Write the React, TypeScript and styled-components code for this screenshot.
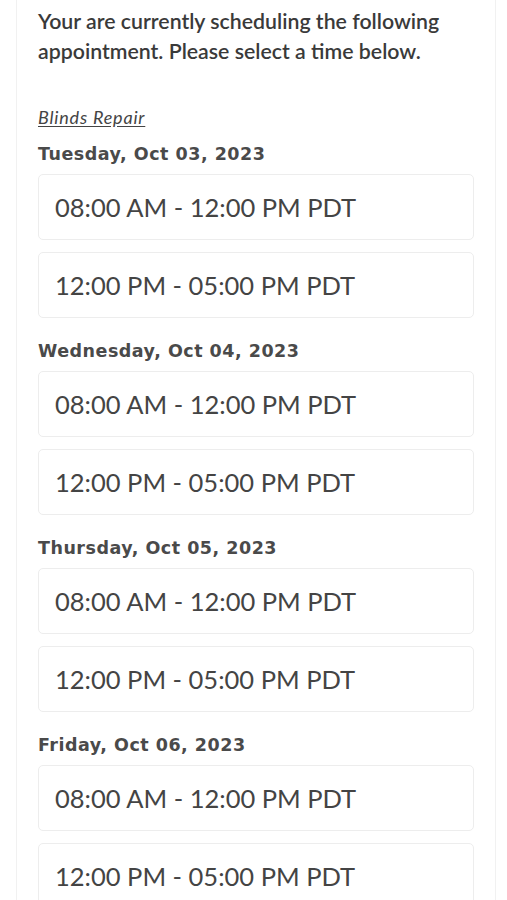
import styled, { createGlobalStyle } from 'styled-components'

const GlobalStyle = createGlobalStyle`
  html, body {
    margin: 0;
    padding: 0;
    background: #fff;
  }
  body {
    font-family: Lato, "Liberation Sans", sans-serif;
    color: #333;
  }
`

const Card = styled.div`
  margin: 0 11px 0 16px;
  border: 1px solid #f1f1f1;
  border-top: none;
  padding: 6px 21px 0 21px;
  min-height: 900px;
  box-sizing: border-box;
  overflow: hidden;
`

const Intro = styled.p`
  margin: 0;
  font-size: 21.3px;
  line-height: 30px;
  font-weight: 600;
  color: #3a3a3a;
`

const Service = styled.a`
  display: inline-block;
  margin-top: 40px;
  font-size: 18px;
  letter-spacing: 0.8px;
  font-style: italic;
  color: #444;
  text-decoration: underline;
  text-underline-offset: 2px;
`

const Day = styled.section`
  margin-top: 16px;

  & + & {
    margin-top: 23px;
  }
`

const DayTitle = styled.h3`
  margin: 0 0 10px;
  font-family: "DejaVu Sans", "Open Sans", sans-serif;
  font-size: 17.5px;
  line-height: 20px;
  letter-spacing: 0.5px;
  font-weight: 600;
  color: #4a4a4a;
`

const Slots = styled.div`
  display: flex;
  flex-direction: column;
  gap: 12px;
`

const Slot = styled.button`
  display: flex;
  align-items: center;
  height: 66px;
  padding: 0 16px;
  border: 1px solid #ededed;
  border-radius: 5px;
  background: #fff;
  font-family: Lato, "Liberation Sans", sans-serif;
  font-size: 25.5px;
  color: #444;
  text-align: left;
  cursor: pointer;
`

const days = [
  'Tuesday, Oct 03, 2023',
  'Wednesday, Oct 04, 2023',
  'Thursday, Oct 05, 2023',
  'Friday, Oct 06, 2023',
]

const times = ['08:00 AM - 12:00 PM PDT', '12:00 PM - 05:00 PM PDT']

export default function App() {
  return (
    <>
      <GlobalStyle />
      <Card>
        <Intro>
          Your are currently scheduling the following appointment. Please
          select a time below.
        </Intro>
        <Service>Blinds Repair</Service>
        {days.map((d) => (
          <Day key={d}>
            <DayTitle>{d}</DayTitle>
            <Slots>
              {times.map((t) => (
                <Slot key={t}>{t}</Slot>
              ))}
            </Slots>
          </Day>
        ))}
      </Card>
    </>
  )
}
